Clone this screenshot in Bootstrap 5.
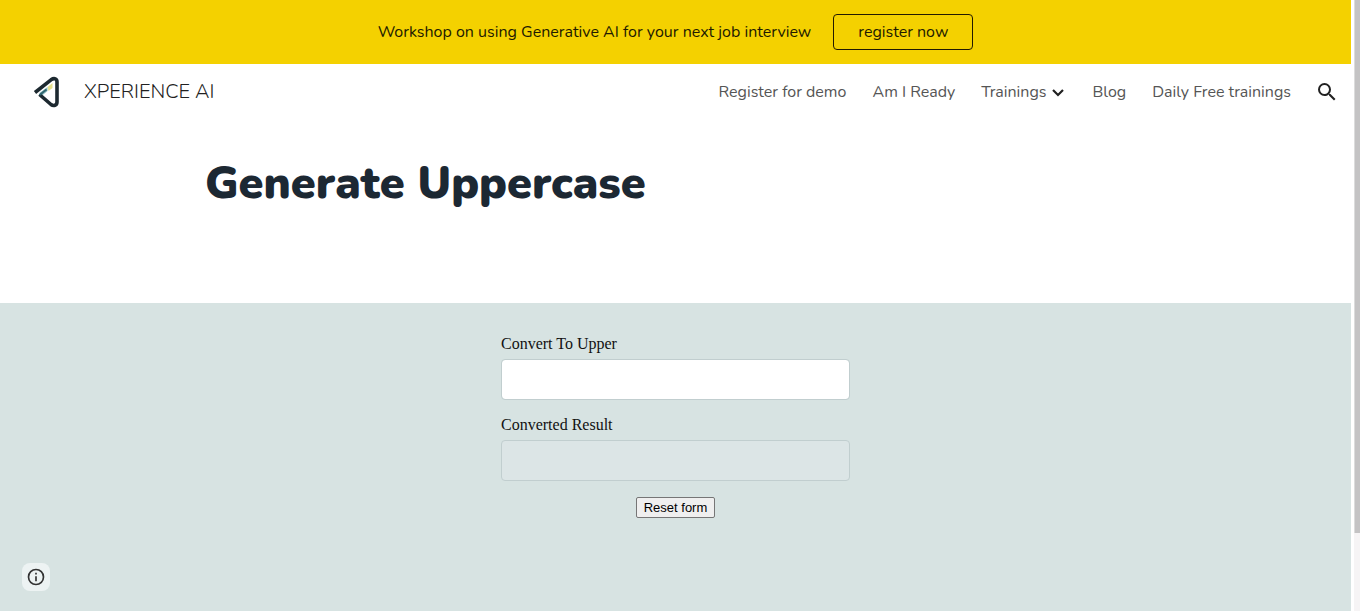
<!DOCTYPE html>
<html lang="en">
<head>
<meta charset="utf-8">
<meta name="viewport" content="width=device-width, initial-scale=1">
<title>XPERIENCE AI - Generate Uppercase</title>
<link href="https://cdn.jsdelivr.net/npm/bootstrap@5.3.0/dist/css/bootstrap.min.css" rel="stylesheet">
<style>
  body { font-family: Nunito, "Open Sans", sans-serif; font-weight: 400; font-size: 16px; color: #212121; }
  .page { min-height: 100vh; }
  .announce { background: #f4d100; min-height: 64px; color: #221a00; column-gap: 22px; }
  .announce .btn { --bs-btn-color: #221a00; --bs-btn-border-color: #221a00; --bs-btn-border-radius: 4px;
    --bs-btn-hover-bg: #221a00; --bs-btn-hover-color: #f5d200; line-height: 24px; padding: 5px 24px; }
  .site-bar { min-height: 56px; padding: 0 12px 0 33px; }
  .brand-name { font-size: 20px; font-weight: 300; color: #212121; }
  .site-links { column-gap: 26px; }
  .site-links .nav-link { color: #555; padding: 0; }
  .search-btn { color: #212121; --bs-btn-border-width: 0; }
  .hero { min-height: 183px; padding: 36px 205px 0; }
  .hero h1 { font-size: 45px; line-height: 56px; font-weight: 900; color: #1c2833; }
  .form-band { background: #d7e3e2; padding-top: 32px; }
  .convert { width: 349px; font-family: "Liberation Serif", serif; color: #111; }
  .convert label { line-height: 18px; margin-bottom: 6px; }
  .convert .form-control { height: 41px; border: 1px solid #c1cecf; border-radius: 4px; }
  .convert .form-control:disabled { background: #dce5e6; }
  .reset { font: 13px/15px "Liberation Sans", sans-serif; padding: 2px 7px; border: 1px solid #767676; border-radius: 2px; background: #efefef; color: #000; }
  .info-btn { width: 28px; height: 28px; left: 22px; bottom: 20px; border-radius: 8px; background: #edf3f3; color: #333; }
  .scroll-track { width: 9px; background: #f6f4f5; border-left: 3px solid #fff; }
  .scroll-thumb { width: 6px; height: 533px; background: #c4c3c4; border-left: 1px solid #dcdcdc; }
</style>
</head>
<body>
<div class="page d-flex">
  <div class="flex-grow-1 d-flex flex-column">
    <div class="announce d-flex align-items-center justify-content-center flex-wrap">
      <span>Workshop on using Generative AI for your next job interview</span>
      <a href="#" class="btn">register now</a>
    </div>
    <header class="site-bar d-flex align-items-center bg-white gap-4">
      <a href="#" class="d-flex align-items-center text-decoration-none gap-4 me-auto">
        <svg width="27" height="32" viewBox="0 0 26 32" fill="none" aria-hidden="true">
          <path d="M14 11l5-4v5l-4 3z" fill="#e6e08c"/>
          <path d="M6 17l8-6v4l-6 5z" fill="#8bb9bb"/>
          <path d="M1.500 16.500L17.500 3.800C21 1.500 23.500 3 23.500 6v20c0 3.500-3.500 4.500-6 2.500L6 18.500" stroke="#1d2930" stroke-width="3.600" stroke-linejoin="round"/>
          <path d="M6 19l7-5.500" stroke="#2f6670" stroke-width="2"/>
        </svg>
        <span class="brand-name">XPERIENCE AI</span>
      </a>
      <nav class="site-links d-flex align-items-center" aria-label="Main">
        <a class="nav-link" href="#">Register for demo</a>
        <a class="nav-link" href="#">Am I Ready</a>
        <a class="nav-link d-flex align-items-center gap-1" href="#">Trainings
          <svg width="16" height="16" viewBox="0 0 16 16" fill="none" stroke="#212121" stroke-width="2.200" aria-hidden="true"><path d="M3 6l5 5 5-5"/></svg>
        </a>
        <a class="nav-link" href="#">Blog</a>
        <a class="nav-link" href="#">Daily Free trainings</a>
      </nav>
      <button type="button" class="search-btn btn p-0 d-flex" aria-label="Search">
        <svg width="24" height="24" viewBox="0 0 24 24" fill="currentColor"><path d="M15.500 14h-.79l-.28-.27A6.471 6.471 0 0 0 16 9.500 6.500 6.500 0 1 0 9.500 16c1.610 0 3.090-.59 4.230-1.570l.27.28v.79l5 4.990L20.490 19l-4.990-5zm-6 0C7.010 14 5 11.990 5 9.500S7.010 5 9.500 5 14 7.010 14 9.500 11.990 14 9.500 14z"/></svg>
      </button>
    </header>
    <section class="hero"><h1 class="m-0">Generate Uppercase</h1></section>
    <main class="form-band flex-grow-1">
      <form class="convert mx-auto">
        <div class="mb-3 d-flex flex-column">
          <label for="source">Convert To Upper</label>
          <input id="source" type="text" class="form-control">
        </div>
        <div class="mb-3 d-flex flex-column">
          <label for="result">Converted Result</label>
          <input id="result" type="text" class="form-control" disabled>
        </div>
        <div class="d-flex justify-content-center"><button type="reset" class="reset">Reset form</button></div>
      </form>
    </main>
  </div>
  <div class="scroll-track flex-shrink-0" aria-hidden="true"><div class="scroll-thumb"></div></div>
</div>
<button type="button" class="info-btn btn position-fixed p-0 border-0 d-flex align-items-center justify-content-center" aria-label="Site information">
  <svg width="20" height="20" viewBox="0 0 24 24" fill="currentColor"><path d="M11 17h2v-6h-2v6zm1-15a10 10 0 1 0 0 20 10 10 0 0 0 0-20zm0 18a8 8 0 1 1 0-16 8 8 0 0 1 0 16zM11 9h2V7h-2v2z"/></svg>
</button>
<script src="https://cdn.jsdelivr.net/npm/bootstrap@5.3.0/dist/js/bootstrap.bundle.min.js"></script>
</body>
</html>
